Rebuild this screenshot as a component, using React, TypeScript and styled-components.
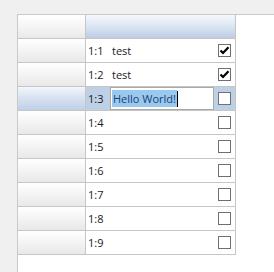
import React from 'react';
import styled, { createGlobalStyle } from 'styled-components';

interface RowData {
  id: string;
  text: string;
  checked: boolean;
}

const rows: RowData[] = [
  { id: '1:1', text: 'test', checked: true },
  { id: '1:2', text: 'test', checked: true },
  { id: '1:3', text: 'Hello World!', checked: false },
  { id: '1:4', text: '', checked: false },
  { id: '1:5', text: '', checked: false },
  { id: '1:6', text: '', checked: false },
  { id: '1:7', text: '', checked: false },
  { id: '1:8', text: '', checked: false },
  { id: '1:9', text: '', checked: false },
];

const EDIT_ROW = 2;

const App: React.FC = () => {
  return (
    <>
      <GlobalStyle />
      <Window>
        <Panel>
          <Grid>
            <CornerHeader />
            <ColumnHeader />
            {rows.map((row, index) => {
              const editing = index === EDIT_ROW;
              return (
                <React.Fragment key={row.id}>
                  <RowHeader selected={editing} />
                  <Cell selected={editing}>
                    <CellId>{row.id}</CellId>
                    {editing ? (
                      <Editor>
                        <Selection>{row.text}</Selection>
                        <Caret />
                      </Editor>
                    ) : (
                      <CellText>{row.text}</CellText>
                    )}
                    <CheckArea>
                      <CheckBox>
                        {row.checked && (
                          <svg width="11" height="11" viewBox="0 0 11 11">
                            <path d="M1.5 5.5 L4 8 L9.5 2.2" fill="none" stroke="#000" strokeWidth="2.2" />
                          </svg>
                        )}
                      </CheckBox>
                    </CheckArea>
                  </Cell>
                </React.Fragment>
              );
            })}
          </Grid>
        </Panel>
      </Window>
    </>
  );
};

export default App;

const GlobalStyle = createGlobalStyle`
  html, body {
    margin: 0;
    padding: 0;
    background: #f0f0f0;
  }
  body {
    font-family: 'Open Sans', 'Noto Sans', sans-serif;
    font-size: 11px;
    color: #000;
  }
`;

const Window = styled.div`
  width: 274px;
  height: 272px;
  padding: 14px 0 0 17px;
  box-sizing: border-box;
  background: #f0f0f0;
  display: flex;
  overflow: hidden;
`;

const Panel = styled.div`
  flex: 1;
  background: #ffffff;
  border-top: 1px solid #c9c9c9;
  border-left: 1px solid #c9c9c9;
`;

const Grid = styled.div`
  display: grid;
  grid-template-columns: 68px 150px;
  grid-auto-rows: 24px;
`;

const HeaderBase = styled.div`
  box-sizing: border-box;
  border-right: 1px solid #c6c6c6;
  border-bottom: 1px solid #c6c6c6;
`;

const CornerHeader = styled(HeaderBase)`
  background: linear-gradient(to bottom, #ffffff 0%, #f6f6f6 45%, #e9e9e9 100%);
`;

const ColumnHeader = styled(HeaderBase)`
  background: linear-gradient(to bottom, #f5f8fc 0%, #dde7f3 45%, #bccde4 100%);
`;

const RowHeader = styled(HeaderBase)<{ selected?: boolean }>`
  background: ${p =>
    p.selected
      ? 'linear-gradient(to bottom, #f3f6fb 0%, #d8e3f1 45%, #bfd0e7 100%)'
      : 'linear-gradient(to bottom, #ffffff 0%, #f5f5f5 45%, #e8e8e8 100%)'};
`;

const Cell = styled.div<{ selected?: boolean }>`
  box-sizing: border-box;
  border-right: 1px solid #c6c6c6;
  border-bottom: 1px solid #c6c6c6;
  display: flex;
  align-items: center;
  background: ${p => (p.selected ? '#bed0e6' : '#ffffff')};
`;

const CellId = styled.span`
  width: 22px;
  padding-left: 2px;
  flex-shrink: 0;
  color: #1a1a1a;
`;

const CellText = styled.span`
  flex: 1;
  padding-left: 2px;
  color: #1a1a1a;
`;

const Editor = styled.div`
  flex: 1;
  align-self: stretch;
  margin-top: 0;
  box-sizing: border-box;
  border: 1px solid #a8a8a8;
  background: #ffffff;
  display: flex;
  align-items: center;
  padding-left: 1px;
`;

const Selection = styled.span`
  background: #99c9ef;
  color: #1b3f73;
  line-height: 17px;
  padding: 0 1px;
`;

const Caret = styled.span`
  width: 1px;
  height: 16px;
  background: #000;
`;

const CheckArea = styled.div`
  width: 21px;
  flex-shrink: 0;
  display: flex;
  align-items: center;
  justify-content: flex-start;
  padding-left: 4px;
  box-sizing: border-box;
`;

const CheckBox = styled.div`
  width: 13px;
  height: 13px;
  box-sizing: border-box;
  border: 1px solid #707070;
  background: #ffffff;
  display: flex;
  align-items: center;
  justify-content: center;
`;
